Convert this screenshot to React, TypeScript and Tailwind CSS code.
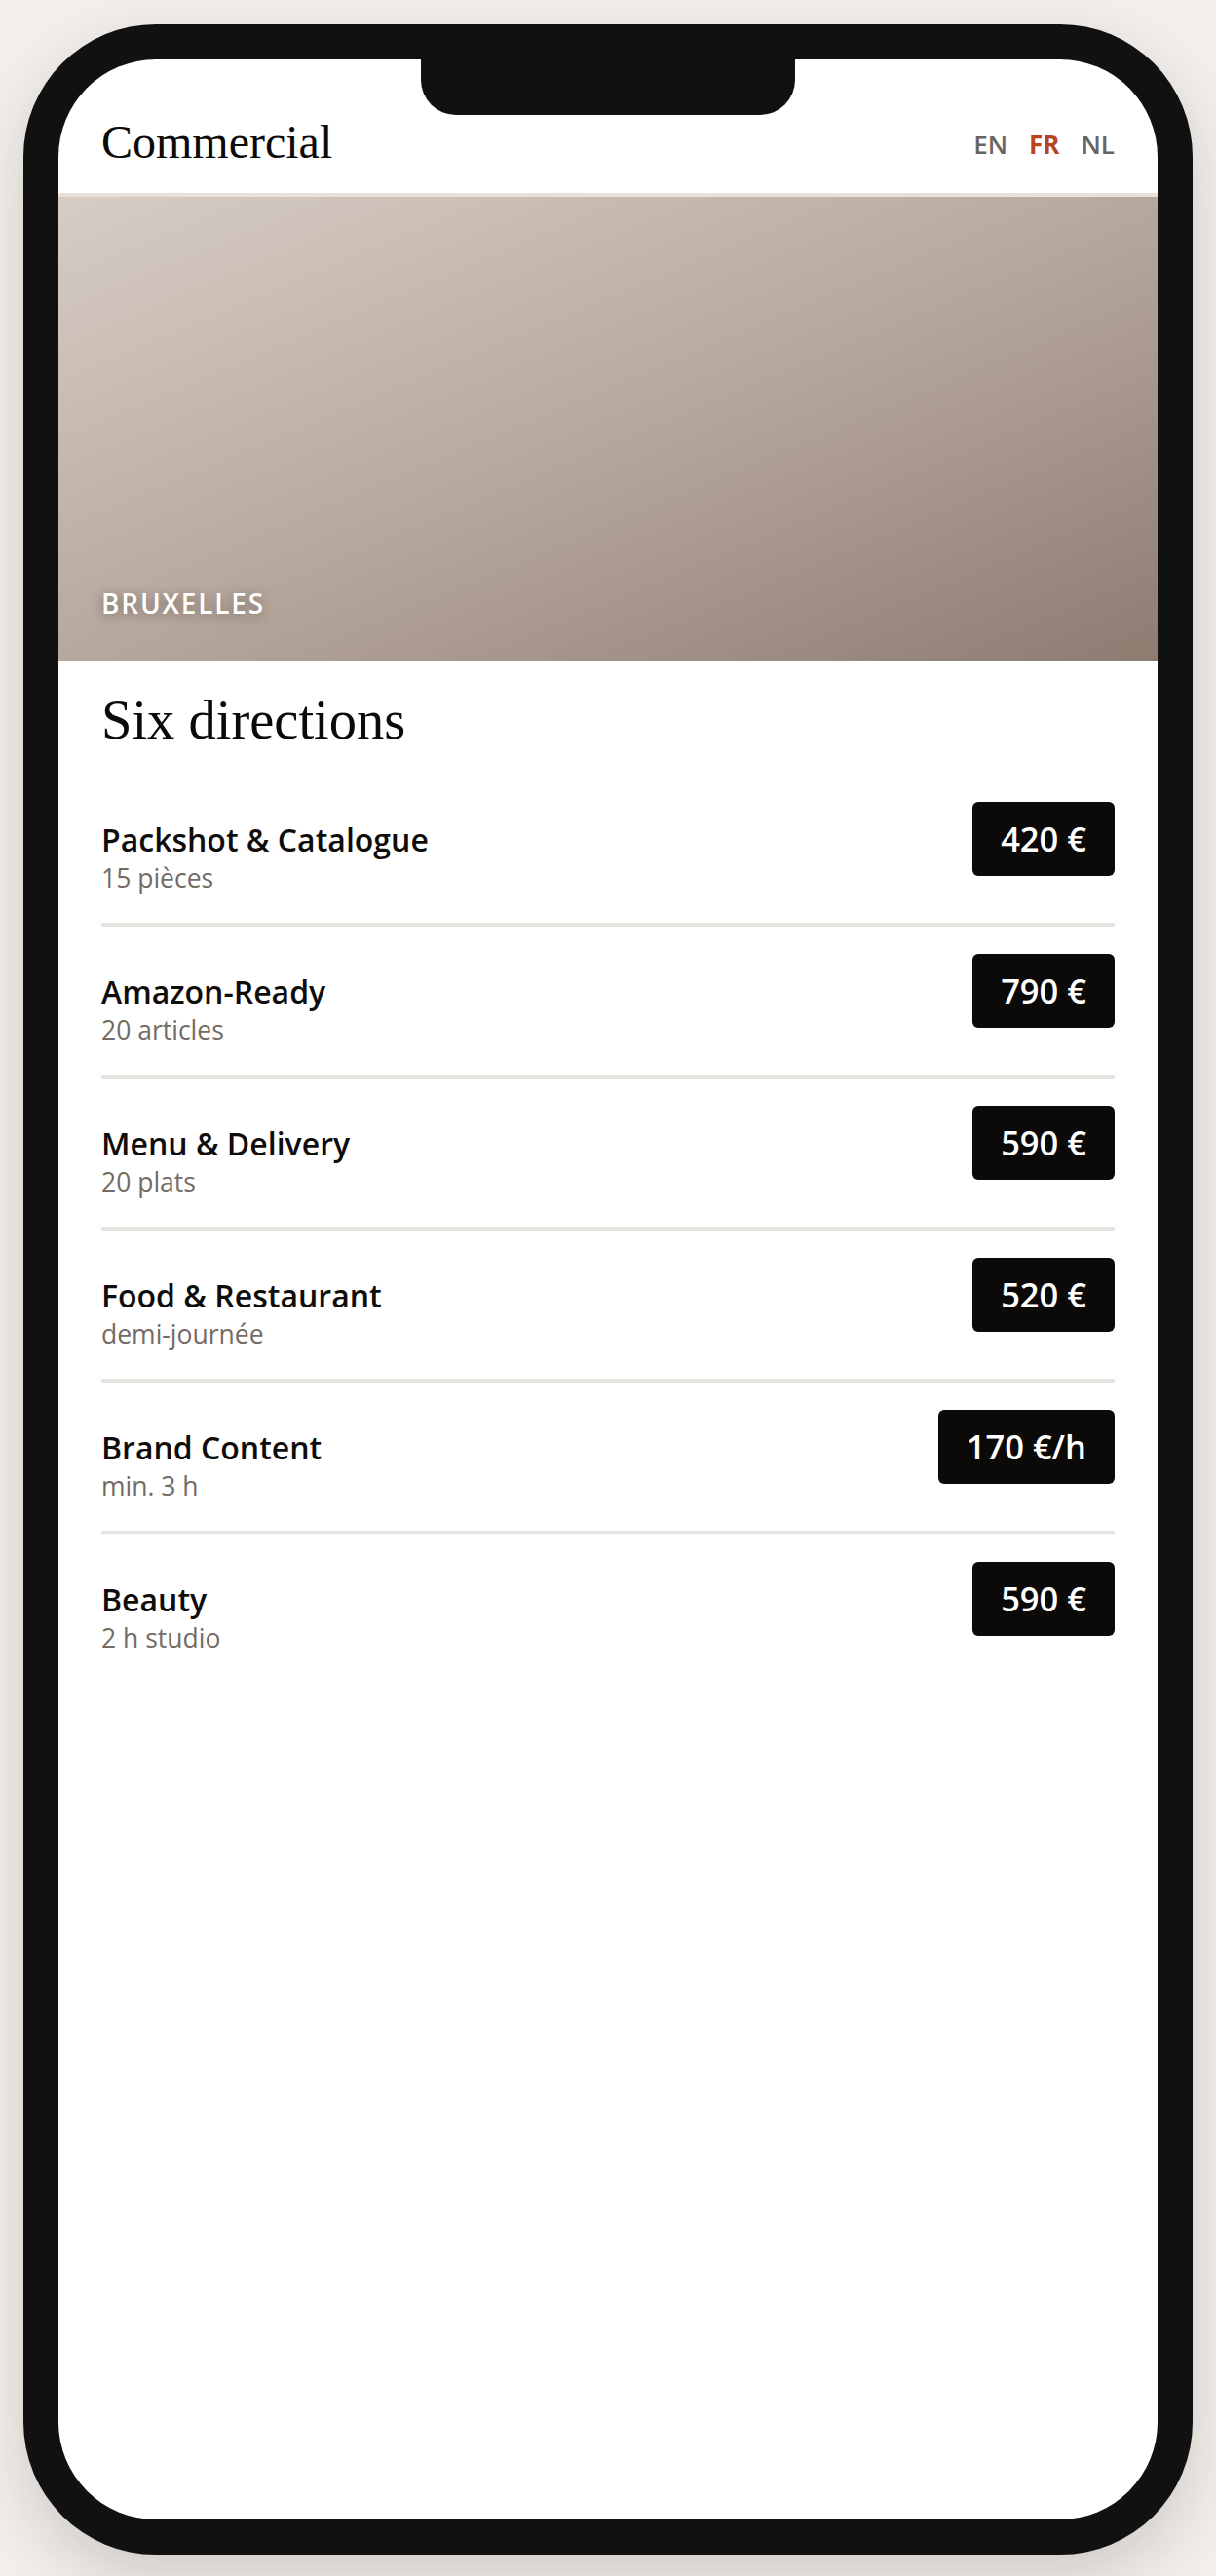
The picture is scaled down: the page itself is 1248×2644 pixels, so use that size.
const services = [
  { name: 'Packshot & Catalogue', detail: '15 pièces', price: '420 €' },
  { name: 'Amazon-Ready', detail: '20 articles', price: '790 €' },
  { name: 'Menu & Delivery', detail: '20 plats', price: '590 €' },
  { name: 'Food & Restaurant', detail: 'demi-journée', price: '520 €' },
  { name: 'Brand Content', detail: 'min. 3 h', price: '170 €/h' },
  { name: 'Beauty', detail: '2 h studio', price: '590 €' },
]

const serif = "font-['Liberation_Serif','Times_New_Roman',serif]"
const sans = "font-['Open_Sans','Noto_Sans',sans-serif]"

function ServiceRow({
  name,
  detail,
  price,
  last,
}: {
  name: string
  detail: string
  price: string
  last: boolean
}) {
  return (
    <div
      className={`flex items-start justify-between pt-[28px] pb-[28px] ${
        last ? '' : 'border-b-4 border-[#e7e3df]'
      }`}
    >
      <div className="mt-[19px]">
        <p className="text-[32px] leading-[40px] font-semibold text-[#0f0d0b]">{name}</p>
        <p className="mt-[1px] text-[26.5px] leading-[36px] text-[#736b65]">{detail}</p>
      </div>
      <span className="flex h-[76px] shrink-0 items-center rounded-[6px] bg-[#0c0a08] px-[29px] text-[34.5px] font-semibold text-white">
        {price}
      </span>
    </div>
  )
}

export default function App() {
  return (
    <div className={`min-h-screen bg-[#f1eeeb] pt-[25px] pb-[22px] ${sans}`}>
      <div className="relative mx-auto h-[2597px] w-[1200px] rounded-[136px] bg-[#111111] p-[36px] shadow-[0_24px_60px_rgba(60,45,35,0.18)]">
        <div className="relative flex h-full flex-col overflow-hidden rounded-[100px] bg-white">
          {/* notch */}
          <div className="absolute left-1/2 top-0 z-10 h-[57px] w-[384px] -translate-x-1/2 rounded-b-[36px] bg-[#111111]" />

          <header className="flex h-[141px] shrink-0 items-end justify-between border-b-4 border-[#e6e1dc] px-[44px] pb-[28px]">
            <h1 className={`${serif} text-[48px] leading-none text-[#0c0a09]`}>Commercial</h1>
            <nav className="mb-[9px] flex gap-[22px] text-[26px] leading-none font-semibold">
              <span className="text-[#6b6560]">EN</span>
              <span className="font-bold text-[#b8441e]">FR</span>
              <span className="text-[#6b6560]">NL</span>
            </nav>
          </header>

          <div className="flex h-[476px] shrink-0 items-end bg-linear-to-br from-[#d7cdc5] via-[#b7a89e] to-[#8e7c71] px-[44px] pb-[45px]">
            <span className="text-[28px] leading-none font-semibold tracking-[0.065em] text-white [text-shadow:0_2px_12px_rgba(40,25,15,0.45)]">
              BRUXELLES
            </span>
          </div>

          <section className="px-[44px] pt-[33px]">
            <h2 className={`${serif} mb-[27px] text-[56.5px] leading-none text-[#0c0a09]`}>Six directions</h2>
            <div>
              {services.map((s, i) => (
                <ServiceRow key={s.name} {...s} last={i === services.length - 1} />
              ))}
            </div>
          </section>
        </div>
      </div>
    </div>
  )
}
